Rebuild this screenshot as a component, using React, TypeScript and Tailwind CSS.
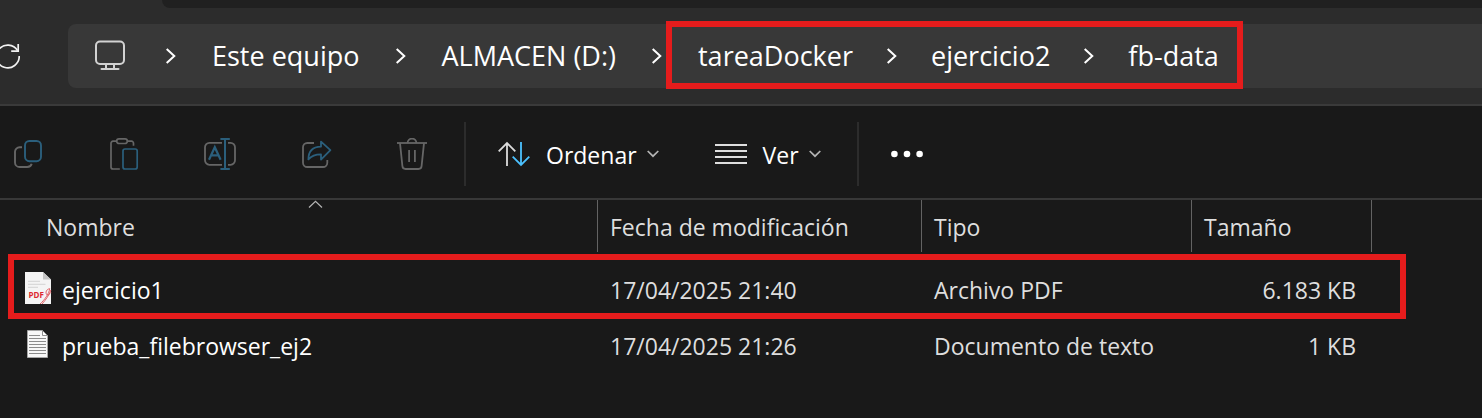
import React from "react";

function Chevron() {
  return (
    <svg className="h-4 w-3 shrink-0" viewBox="0 0 12 16" fill="none" stroke="#fff" strokeWidth="2" aria-hidden="true">
      <path d="M1.700 .9 9.300 8l-7.600 7.100" />
    </svg>
  );
}

function ChevronDown() {
  return (
    <svg className="h-2 w-3 shrink-0" viewBox="0 0 12 8" fill="none" stroke="#b4b4b4" strokeWidth="1.7" aria-hidden="true">
      <path d="M.7 1 6 6.200 11.300 1" />
    </svg>
  );
}

function RefreshIcon() {
  return (
    <svg className="h-7 w-5" viewBox="0 0 20 28" fill="none" stroke="#f2f2f2" strokeWidth="1.7" aria-hidden="true">
      <path d="M18.200 2v7.100h-7" />
      <path d="M17.600 8.600A11.400 11.400 0 1 0 19.200 14" />
    </svg>
  );
}

function ComputerIcon() {
  return (
    <svg className="mr-1 h-8 w-8 shrink-0" viewBox="0 0 32 32" fill="none" stroke="#d2d2d2" strokeWidth="2" aria-hidden="true">
      <rect x="2" y="1.600" width="28" height="22.400" rx="4" />
      <path d="M12 24v4.500M20 24v4.500" />
      <path d="M7.500 29h17" strokeLinecap="round" />
    </svg>
  );
}

const GREY = "#666666";
const BLUE = "#2b5f7c";

function CopyIcon() {
  return (
    <svg className="h-8 w-8" viewBox="0 0 32 32" fill="none" strokeWidth="1.9" aria-hidden="true">
      <path stroke={GREY} d="M10 9.200H7.600A4.600 4.600 0 0 0 3 13.800v10.600A4.600 4.600 0 0 0 7.600 29h7.600c2.200 0 4-1.300 4.500-3.200" />
      <rect stroke={BLUE} x="13" y="3" width="16" height="20.200" rx="4.400" />
    </svg>
  );
}

function PasteIcon() {
  return (
    <svg className="h-8 w-8" viewBox="0 0 32 32" fill="none" strokeWidth="1.7" aria-hidden="true">
      <g stroke={GREY}>
        <path d="M8.600 3.200H5a2 2 0 0 0-2 2V29a2 2 0 0 0 2 2h6.800" />
        <path d="M19.400 3.200H23.500a2 2 0 0 1 2 2V7.800" />
        <rect x="8.700" y=".9" width="10.600" height="4.600" rx="2.300" />
      </g>
      <rect stroke={BLUE} x="15" y="11" width="14.200" height="20" rx="2" />
    </svg>
  );
}

function RenameIcon() {
  return (
    <svg className="h-8 w-8" viewBox="0 0 32 32" fill="none" strokeWidth="1.8" aria-hidden="true">
      <g stroke={GREY}>
        <path d="M18 4.900H5.400A4.400 4.400 0 0 0 1 9.300v13A4.400 4.400 0 0 0 5.400 26.800H18" />
        <path d="M24 4.900h2.600A4.400 4.400 0 0 1 31 9.300v13a4.400 4.400 0 0 1-4.400 4.500H24" />
      </g>
      <g stroke={BLUE}>
        <path d="M5 21.800 10.800 9.200l5.800 12.600M7 17.300h7.600" strokeWidth="2.200" />
        <path d="M21 1v30M16.400 1h9.400M16.400 31h9.400" strokeWidth="2" />
      </g>
    </svg>
  );
}

function ShareIcon() {
  return (
    <svg className="h-8 w-8" viewBox="0 0 32 32" fill="none" strokeWidth="1.8" aria-hidden="true">
      <path stroke={GREY} d="M14 5H7.300A4.300 4.300 0 0 0 3 9.300v15.400A4.300 4.300 0 0 0 7.300 29H23a4.300 4.300 0 0 0 4.300-4.300V22" />
      <path stroke={BLUE} strokeLinejoin="round" d="M21 3.600 30.400 12.200 21 21.600V16.400c-5.600 0-9.400 1.200-12.600 5C8.400 13 13.200 8.800 21 8.600Z" />
    </svg>
  );
}

function TrashIcon() {
  return (
    <svg className="h-8 w-8" viewBox="0 0 32 32" fill="none" stroke={GREY} strokeWidth="1.8" aria-hidden="true">
      <path d="M1 5h30" />
      <path d="M11.600 5a4.400 4.400 0 0 1 8.800 0" />
      <path d="M4 5.200 6.400 28a3.200 3.200 0 0 0 3.200 3h12.800a3.200 3.200 0 0 0 3.200-3L28 5.200" />
      <path d="M13.100 12v12M18.900 12v12" />
    </svg>
  );
}

function SortIcon() {
  return (
    <svg className="h-8 w-8 shrink-0" viewBox="0 0 32 32" fill="none" strokeWidth="1.8" aria-hidden="true">
      <path stroke="#dcdcdc" d="M9 28V4.800M.7 13.300 9 5l8.300 8.300" />
      <path stroke="#4cc2ff" d="M23 4v23.200M14.700 18.700 23 27l8.300-8.300" />
    </svg>
  );
}

function ViewIcon() {
  return (
    <svg className="h-8 w-8 shrink-0" viewBox="0 0 32 32" fill="#dedede" aria-hidden="true">
      <path d="M0 6h32v2H0zM0 12h32v2H0zM0 18h32v2H0zM0 24h32v2H0z" />
    </svg>
  );
}

function MoreIcon() {
  return (
    <svg className="h-8 w-8" viewBox="0 0 32 32" fill="#fff" aria-hidden="true">
      <circle cx="3.400" cy="16" r="3.300" />
      <circle cx="16" cy="16" r="3.300" />
      <circle cx="28.600" cy="16" r="3.300" />
    </svg>
  );
}

function PdfIcon() {
  return (
    <svg className="-mt-1 h-8 w-7 shrink-0" viewBox="0 0 28 32" aria-hidden="true">
      <path fill="#f4f4f4" d="M1 0h18l8 7.500V32H1z" />
      <path fill="#c4c4c4" d="M19 0l8 7.500h-8z" />
      <path stroke="#d2d2d2" strokeWidth="1" d="M4 9.300h12M4 12.300h17.500M4 15.300h10" />
      <text x="4.500" y="26" fill="#dd2730" fontFamily="Open Sans, sans-serif" fontSize="8" fontWeight="700">PDF</text>
      <path fill="none" stroke="#df5359" strokeWidth=".9" d="M16 32c4.500-4 8.800-10 9.800-15.300-3.300.3-4.800 3.800-3 6 1.100.9 2.700-.5 4.100-2.300M18 32c3.700-4 7.500-9.500 8.900-14" />
    </svg>
  );
}

function TextFileIcon() {
  return (
    <svg className="-mt-1 h-8 w-7 shrink-0" viewBox="0 0 28 32" aria-hidden="true">
      <path fill="#f8f8f8" stroke="#a5a5a5" d="M3.500 2.500h15l5 5v22h-20z" />
      <path fill="#fff" stroke="#8d8d8d" d="M18.500 2.500v5h5z" />
      <path stroke="#8c8c8c" d="M5 7.500h11M5 10.500h17M5 13.500h17M5 16.500h17M5 19.500h17M5 22.500h17M5 25.500h17" />
    </svg>
  );
}

function Crumb({ children }: { children: React.ReactNode }) {
  return (
    <a href="#" className="whitespace-nowrap">
      {children}
    </a>
  );
}

const actions = [
  { label: "Copiar", Icon: CopyIcon },
  { label: "Pegar", Icon: PasteIcon },
  { label: "Cambiar nombre", Icon: RenameIcon },
  { label: "Compartir", Icon: ShareIcon },
  { label: "Eliminar", Icon: TrashIcon },
];

const files = [
  { name: "ejercicio1", date: "17/04/2025 21:40", type: "Archivo PDF", size: "6.183 KB", Icon: PdfIcon, marked: true },
  { name: "prueba_filebrowser_ej2", date: "17/04/2025 21:26", type: "Documento de texto", size: "1 KB", Icon: TextFileIcon, marked: false },
];

const headInner = "flex h-[52px] items-center border-r border-[#636363] pt-0.5 pl-3";

export default function App() {
  return (
    <div className="min-h-screen overflow-hidden bg-[#191919] font-['Open_Sans','Noto_Sans',sans-serif] text-white">
      <header className="border-b-2 border-[#3a3a3a] bg-[#2c2c2c] pb-4">
        <div className="ml-[162px] h-2 rounded-bl-lg bg-[#202020]" />
        <div className="mt-4 flex">
          <button type="button" aria-label="Actualizar" className="flex w-[68px] shrink-0 items-center">
            <RefreshIcon />
          </button>
          <nav aria-label="Ruta" className="flex h-16 grow items-center gap-[35px] rounded-l-lg bg-[#383838] pl-[26px] text-[27px]">
            <ComputerIcon />
            <Chevron />
            <Crumb>Este equipo</Crumb>
            <Chevron />
            <Crumb>ALMACEN (D:)</Crumb>
            <Chevron />
            <div className="relative flex items-center gap-[33px]">
              <Crumb>tareaDocker</Crumb>
              <Chevron />
              <Crumb>ejercicio2</Crumb>
              <Chevron />
              <Crumb>fb-data</Crumb>
              <span className="pointer-events-none absolute -top-[15px] -right-6 -bottom-[13px] -left-8 border-6 border-[#e51c1c]" />
            </div>
          </nav>
        </div>
      </header>

      <div role="toolbar" aria-label="Acciones" className="flex h-[94px] items-center border-b-2 border-[#383838] pt-1 text-[23px]">
        <div className="flex gap-16 pr-9 pl-3">
          {actions.map(({ label, Icon }) => (
            <button key={label} type="button" disabled aria-label={label}>
              <Icon />
            </button>
          ))}
        </div>
        <div className="h-16 w-0.5 bg-[#2c2c2c]" />
        <button type="button" className="ml-8 flex items-center">
          <SortIcon />
          <span className="mr-2.5 ml-4 pt-0.5">Ordenar</span>
          <ChevronDown />
        </button>
        <button type="button" className="ml-14 flex items-center">
          <ViewIcon />
          <span className="mr-2.5 ml-4 pt-0.5">Ver</span>
          <ChevronDown />
        </button>
        <div className="ml-9 h-16 w-0.5 bg-[#2c2c2c]" />
        <button type="button" aria-label="Ver más" className="ml-8">
          <MoreIcon />
        </button>
      </div>

      <table className="w-full table-fixed border-collapse text-left text-[23px] text-[#dedede]">
        <colgroup>
          <col className="w-[598px]" />
          <col className="w-[324px]" />
          <col className="w-[270px]" />
          <col className="w-[180px]" />
          <col />
        </colgroup>
        <thead>
          <tr className="h-[62px] align-top">
            <th scope="col" aria-sort="ascending" className="relative p-0 font-normal">
              <svg className="absolute top-0 left-[308px] h-2 w-4" viewBox="0 0 16 8" fill="none" stroke="#b5b5b5" strokeWidth="1.2" aria-hidden="true">
                <path d="M1 7.500 7.500 1.300 14 7.500" />
              </svg>
              <div className="flex h-[52px] items-center border-r border-[#636363] pt-0.5 pl-[46px]">Nombre</div>
            </th>
            <th scope="col" className="p-0 font-normal">
              <div className={headInner}>Fecha de modificación</div>
            </th>
            <th scope="col" className="p-0 font-normal">
              <div className={headInner}>Tipo</div>
            </th>
            <th scope="col" className="p-0 font-normal">
              <div className={headInner}>Tamaño</div>
            </th>
            <td />
          </tr>
        </thead>
        <tbody>
          {files.map(({ name, date, type, size, Icon, marked }) => (
            <tr key={name} className="relative h-14">
              <td className="py-0 pr-0 pl-6 text-white">
                <div className="flex items-center">
                  <Icon />
                  <span className="ml-2.5">{name}</span>
                </div>
                {marked && (
                  <span className="pointer-events-none absolute -top-2 right-[76px] -bottom-px left-2 border-6 border-[#e51c1c]" />
                )}
              </td>
              <td className="py-0 pr-0 pl-3">{date}</td>
              <td className="py-0 pr-0 pl-3">{type}</td>
              <td className="py-0 pr-4 pl-0 text-right">{size}</td>
              <td />
            </tr>
          ))}
        </tbody>
      </table>
    </div>
  );
}
